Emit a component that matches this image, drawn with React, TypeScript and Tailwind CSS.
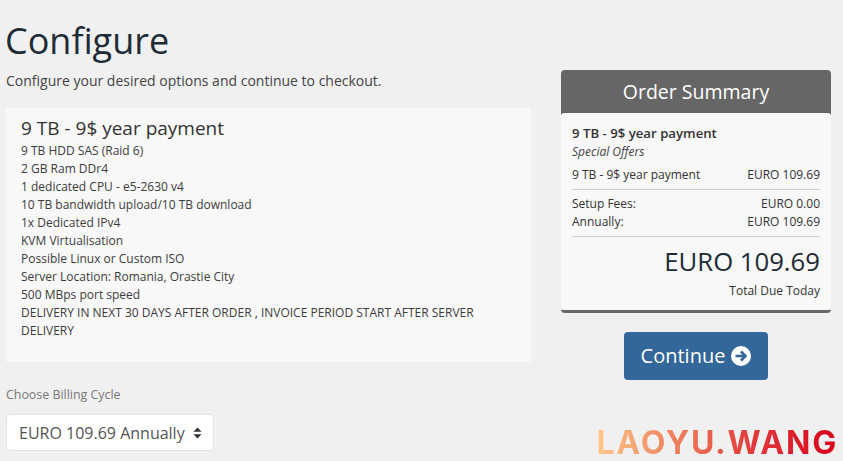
import React from 'react';

const features = [
  '9 TB HDD SAS (Raid 6)',
  '2 GB Ram DDr4',
  '1 dedicated CPU - e5-2630 v4',
  '10 TB bandwidth upload/10 TB download',
  '1x Dedicated IPv4',
  'KVM Virtualisation',
  'Possible Linux or Custom ISO',
  'Server Location: Romania, Orastie City',
  '500 MBps port speed',
  'DELIVERY IN NEXT 30 DAYS AFTER ORDER , INVOICE PERIOD START AFTER SERVER DELIVERY',
];

const App = () => {
  return (
    <div className="relative h-[461px] w-[843px] bg-[#f0f0f0] font-['Open_Sans',sans-serif] text-[#333]">
      <div className="flex pl-[6px] pr-[12px]">
        <div className="w-[525px] shrink-0">
          <h1 className="-ml-[1px] pt-[17px] text-[36px] leading-[47px] text-[#212b36]">Configure</h1>
          <p className="mt-[7px] text-[14px] leading-[20px] text-[#444]">Configure your desired options and continue to checkout.</p>
          <div className="mt-[17px] h-[254px] bg-[#f8f8f8] pl-[15px] pr-[40px] pt-[7px]">
            <h2 className="mb-[1px] text-[19px] leading-[26px] text-[#333]">9 TB - 9$ year payment</h2>
            <div className="text-[12px] leading-[18px] text-[#3c3c3c]">
              {features.map((line) => (
                <div key={line}>{line}</div>
              ))}
            </div>
          </div>
          <label className="mt-[24px] block text-[12.4px] leading-[18px] text-[#777]">Choose Billing Cycle</label>
          <div className="mt-[10px] flex h-[37px] w-[208px] items-center justify-between rounded-[4px] border border-[#e4e4e4] bg-white pl-[12px] pr-[11px] text-[16px] text-[#555]">
            <span>EURO 109.69 Annually</span>
            <svg width="9" height="12" viewBox="0 0 9 12" className="text-[#333]">
              <path d="M4.5 0.5 L8.5 4.8 H0.5 Z M4.5 11.5 L8.5 7.2 H0.5 Z" fill="currentColor" />
            </svg>
          </div>
        </div>

        <div className="ml-[30px] flex w-[270px] shrink-0 flex-col items-center pt-[70px]">
          <div className="w-full overflow-hidden rounded-[4px] border-b-[3px] border-[#666] bg-[#666]">
            <div className="h-[43px] text-center text-[19.5px] leading-[43px] text-white">Order Summary</div>
            <div className="rounded-t-[3px] bg-[#f8f8f8] px-[11px] pt-[11px] pb-[10px] text-[12px] text-[#333]">
              <div className="text-[13.2px] leading-[18px] font-semibold">9 TB - 9$ year payment</div>
              <div className="mt-[1px] text-[12px] leading-[18px] text-[#444] italic">Special Offers</div>
              <div className="mt-[5px] flex justify-between border-b border-[#ccc] pb-[5px] leading-[18px]">
                <span>9 TB - 9$ year payment</span>
                <span>EURO 109.69</span>
              </div>
              <div className="mt-[5px] flex justify-between leading-[18px]">
                <span>Setup Fees:</span>
                <span>EURO 0.00</span>
              </div>
              <div className="flex justify-between border-b border-[#ccc] pb-[5px] leading-[18px]">
                <span>Annually:</span>
                <span>EURO 109.69</span>
              </div>
              <div className="mt-[7px] text-right text-[25.7px] leading-[36px] text-[#212b36]">EURO 109.69</div>
              <div className="mt-[2px] text-right leading-[18px]">Total Due Today</div>
            </div>
          </div>
          <button className="mt-[19px] flex h-[48px] w-[144px] items-center justify-center gap-[6px] rounded-[4px] bg-[#336699] text-[20px] text-white">
            Continue
            <svg width="20" height="20" viewBox="0 0 20 20">
              <circle cx="10" cy="10" r="10" fill="white" />
              <path d="M4.5 10 H14 M10 5.5 L14.5 10 L10 14.5" fill="none" stroke="#336699" strokeWidth="2.6" />
            </svg>
          </button>
        </div>
      </div>

      <div className="absolute right-[5px] top-[425px] bg-[linear-gradient(90deg,#fdc98a_0%,#ec7a5a_35%,#e23a3c_65%,#d9001b_100%)] bg-clip-text font-['Inter',sans-serif] text-[32px] leading-[36px] font-bold tracking-[1.8px] text-transparent">
        LAOYU.WANG
      </div>
    </div>
  );
};

export default App;
